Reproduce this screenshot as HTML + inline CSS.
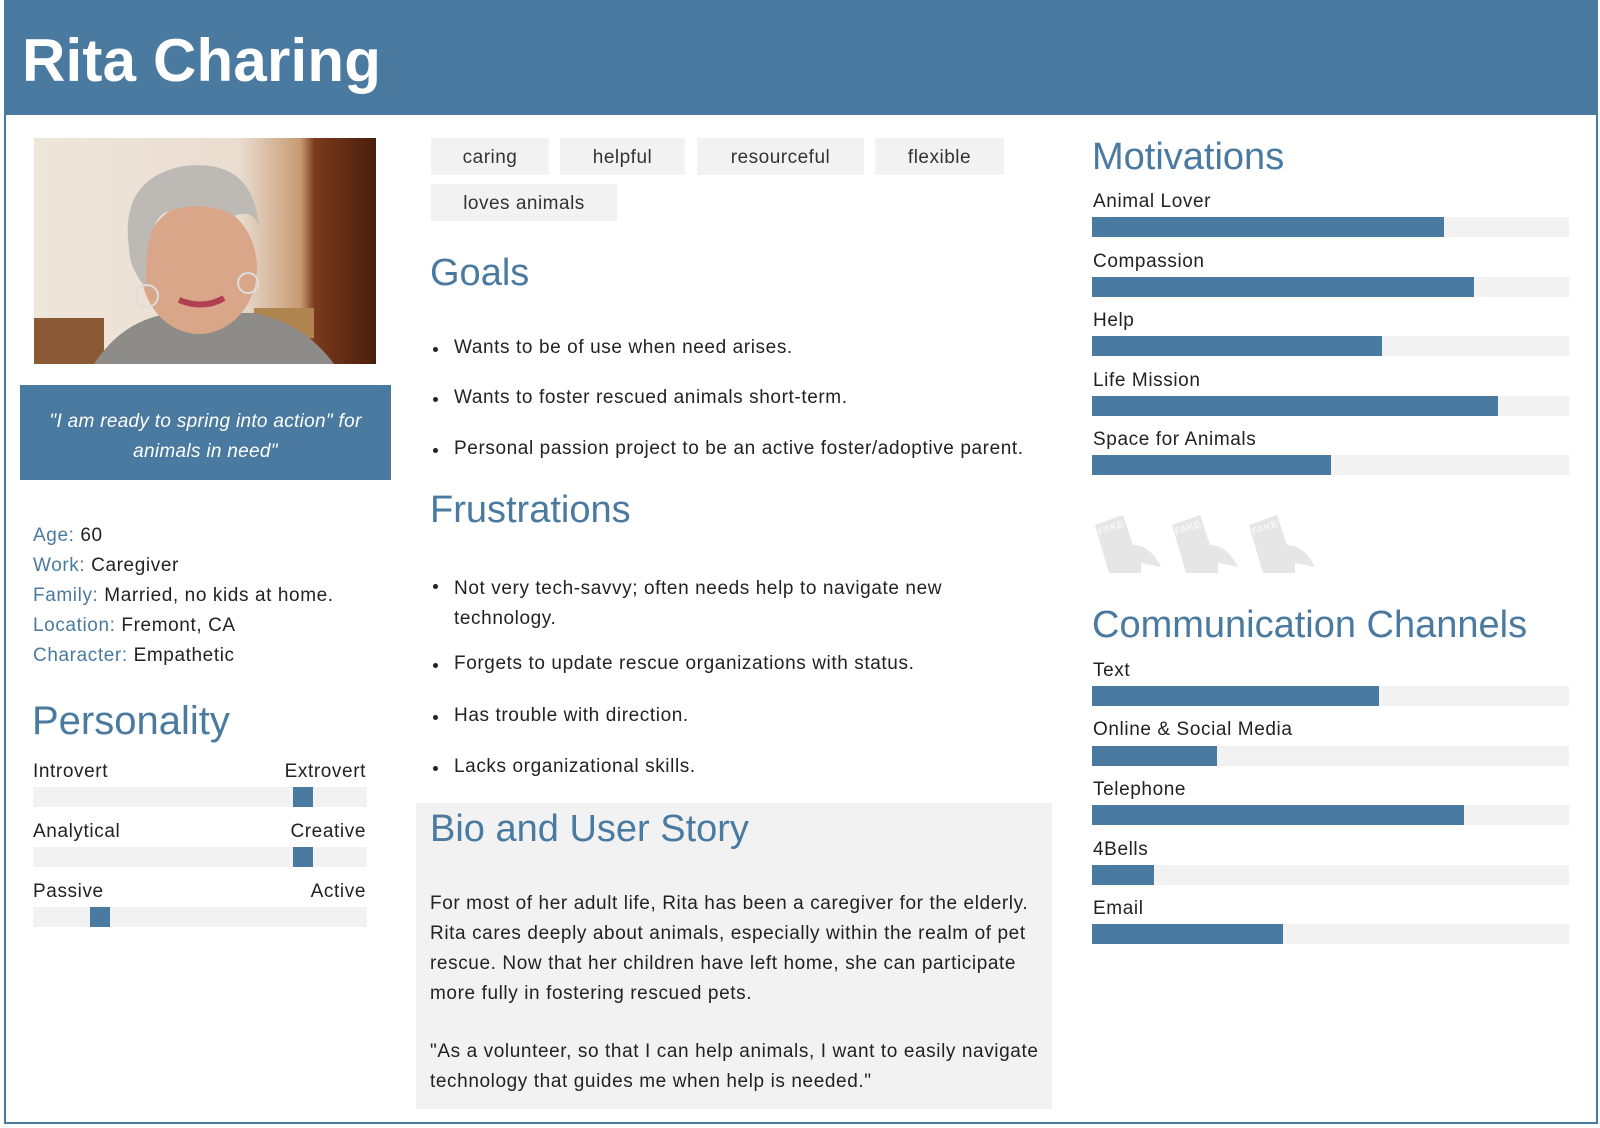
<!DOCTYPE html>
<html><head><meta charset="utf-8">
<style>
*{margin:0;padding:0;box-sizing:border-box}
body{width:1600px;height:1128px;background:#fff;font-family:"Liberation Sans",sans-serif;color:#222;position:relative;overflow:hidden}
.a{position:absolute;white-space:nowrap}
.frame{position:absolute;left:4px;top:0;width:1594px;height:1124px;border:2px solid #4a7aa0}
.hdr{position:absolute;left:4px;top:0;width:1594px;height:115px;background:#4a7aa0}
.title{left:22px;top:26px;font-size:60px;font-weight:bold;color:#fff;letter-spacing:0.2px}
.h{color:#4a7aa0;font-size:38px;transform:translateY(2px)}
.t{font-size:19px;letter-spacing:0.6px;transform:translateY(2px)}
.lab{color:#4a7aa0}
.tag{position:absolute;background:#f2f2f2;height:37px;line-height:40px;text-align:center;font-size:19px;color:#333;letter-spacing:0.5px}
.bar{position:absolute;background:#f2f2f2;height:20px}
.bar i{position:absolute;left:0;top:0;height:20px;background:#4a7aa0}
.mk{position:absolute;top:0;width:20px;height:20px;background:#4a7aa0}
.bul{position:absolute;left:433px;width:5px;height:5px;border-radius:50%;background:#222}
</style></head><body>
<div class="hdr"></div>
<div class="frame"></div>
<div class="a title">Rita Charing</div>

<svg class="a" style="left:34px;top:138px" width="342" height="226" viewBox="0 0 342 226">
<defs><linearGradient id="bg" x1="0" x2="1"><stop offset="0" stop-color="#efe6da"/><stop offset=".6" stop-color="#e9ddd0"/><stop offset=".78" stop-color="#c79a72"/><stop offset=".82" stop-color="#7a3a1c"/><stop offset="1" stop-color="#4a1e0c"/></linearGradient></defs>
<rect width="342" height="226" fill="url(#bg)"/>
<rect x="0" y="180" width="70" height="46" fill="#8a5a36"/>
<rect x="220" y="170" width="60" height="30" fill="#b0844e"/>
<path d="M60 226 Q90 180 140 175 L220 175 Q270 185 300 226Z" fill="#8e8c88"/>
<ellipse cx="165" cy="130" rx="58" ry="66" fill="#d9a68a"/>
<path d="M95 110 Q85 40 150 28 Q220 20 225 90 Q220 70 200 78 Q170 60 130 75 Q110 90 112 150 Q95 130 95 110Z" fill="#bdbab6"/>
<path d="M145 162 Q170 172 190 160" stroke="#b04050" stroke-width="6" fill="none"/>
<circle cx="113" cy="158" r="11" fill="none" stroke="#ddd" stroke-width="2"/>
<circle cx="214" cy="145" r="10" fill="none" stroke="#ddd" stroke-width="2"/>
</svg>

<div class="a" style="left:20px;top:385px;width:371px;height:95px;background:#4a7aa0"></div>
<div class="a" style="left:20px;top:407px;width:371px;text-align:center;color:#fff;font-style:italic;font-size:19px;line-height:30px;white-space:normal;letter-spacing:0.3px">"I am ready to spring into action" for<br>animals in need"</div>

<div class="a t" style="left:33px;top:519px;line-height:30px">
<span class="lab">Age:</span> 60<br><span class="lab">Work:</span> Caregiver<br><span class="lab">Family:</span> Married, no kids at home.<br><span class="lab">Location:</span> Fremont, CA<br><span class="lab">Character:</span> Empathetic</div>

<div class="a h" style="left:32px;top:697px;font-size:40px">Personality</div>
<div class="a t" style="left:33px;top:759px">Introvert</div><div class="a t" style="left:274px;top:759px;width:92px;text-align:right">Extrovert</div>
<div class="bar" style="left:33px;top:787px;width:334px"><span class="mk" style="left:260px"></span></div>
<div class="a t" style="left:33px;top:819px">Analytical</div><div class="a t" style="left:274px;top:819px;width:92px;text-align:right">Creative</div>
<div class="bar" style="left:33px;top:847px;width:334px"><span class="mk" style="left:260px"></span></div>
<div class="a t" style="left:33px;top:879px">Passive</div><div class="a t" style="left:274px;top:879px;width:92px;text-align:right">Active</div>
<div class="bar" style="left:33px;top:907px;width:334px"><span class="mk" style="left:57px"></span></div>

<div class="tag" style="left:431px;top:138px;width:118px">caring</div>
<div class="tag" style="left:560px;top:138px;width:125px">helpful</div>
<div class="tag" style="left:697px;top:138px;width:167px">resourceful</div>
<div class="tag" style="left:875px;top:138px;width:129px">flexible</div>
<div class="tag" style="left:431px;top:184px;width:186px">loves animals</div>

<div class="a h" style="left:430px;top:250px">Goals</div>
<div class="bul" style="top:347px"></div><div class="a t" style="left:454px;top:335px">Wants to be of use when need arises.</div>
<div class="bul" style="top:397px"></div><div class="a t" style="left:454px;top:385px">Wants to foster rescued animals short-term.</div>
<div class="bul" style="top:448px"></div><div class="a t" style="left:454px;top:436px">Personal passion project to be an active foster/adoptive parent.</div>

<div class="a h" style="left:430px;top:487px">Frustrations</div>
<div class="bul" style="top:584px"></div><div class="a t" style="left:454px;top:572px;line-height:30px">Not very tech-savvy; often needs help to navigate new<br>technology.</div>
<div class="bul" style="top:663px"></div><div class="a t" style="left:454px;top:651px">Forgets to update rescue organizations with status.</div>
<div class="bul" style="top:715px"></div><div class="a t" style="left:454px;top:703px">Has trouble with direction.</div>
<div class="bul" style="top:766px"></div><div class="a t" style="left:454px;top:754px">Lacks organizational skills.</div>

<div class="a" style="left:416px;top:803px;width:636px;height:306px;background:#f2f2f2"></div>
<div class="a h" style="left:430px;top:806px">Bio and User Story</div>
<div class="a t" style="left:430px;top:887px;line-height:30px">For most of her adult life, Rita has been a caregiver for the elderly.<br>Rita cares deeply about animals, especially within the realm of pet<br>rescue. Now that her children have left home, she can participate<br>more fully in fostering rescued pets.</div>
<div class="a t" style="left:430px;top:1035px;line-height:30px">"As a volunteer, so that I can help animals, I want to easily navigate<br>technology that guides me when help is needed."</div>

<div class="a h" style="left:1092px;top:134px">Motivations</div>
<div class="a t" style="left:1093px;top:189px">Animal Lover</div>
<div class="bar" style="left:1092px;top:217px;width:477px"><i style="width:352px"></i></div>
<div class="a t" style="left:1093px;top:249px">Compassion</div>
<div class="bar" style="left:1092px;top:277px;width:477px"><i style="width:382px"></i></div>
<div class="a t" style="left:1093px;top:308px">Help</div>
<div class="bar" style="left:1092px;top:336px;width:477px"><i style="width:290px"></i></div>
<div class="a t" style="left:1093px;top:368px">Life Mission</div>
<div class="bar" style="left:1092px;top:396px;width:477px"><i style="width:406px"></i></div>
<div class="a t" style="left:1093px;top:427px">Space for Animals</div>
<div class="bar" style="left:1092px;top:455px;width:477px"><i style="width:239px"></i></div>

<svg class="a" style="left:1095px;top:515px" width="240" height="60" viewBox="0 0 240 60">
<g id="c" fill="#e6e6e6"><path d="M0 10 L28 0 L38 30 Q55 30 66 52 L46 48 L46 58 L14 58Z"/><text x="4" y="20" font-size="10" font-weight="bold" fill="#f6f6f6" font-family="Liberation Sans" transform="rotate(-18 4 20)">FAKE</text></g>
<use href="#c" x="77"/><use href="#c" x="154"/>
</svg>

<div class="a h" style="left:1092px;top:602px">Communication Channels</div>
<div class="a t" style="left:1093px;top:658px">Text</div>
<div class="bar" style="left:1092px;top:686px;width:477px"><i style="width:287px"></i></div>
<div class="a t" style="left:1093px;top:717px">Online &amp; Social Media</div>
<div class="bar" style="left:1092px;top:746px;width:477px"><i style="width:125px"></i></div>
<div class="a t" style="left:1093px;top:777px">Telephone</div>
<div class="bar" style="left:1092px;top:805px;width:477px"><i style="width:372px"></i></div>
<div class="a t" style="left:1093px;top:837px">4Bells</div>
<div class="bar" style="left:1092px;top:865px;width:477px"><i style="width:62px"></i></div>
<div class="a t" style="left:1093px;top:896px">Email</div>
<div class="bar" style="left:1092px;top:924px;width:477px"><i style="width:191px"></i></div>
</body></html>
